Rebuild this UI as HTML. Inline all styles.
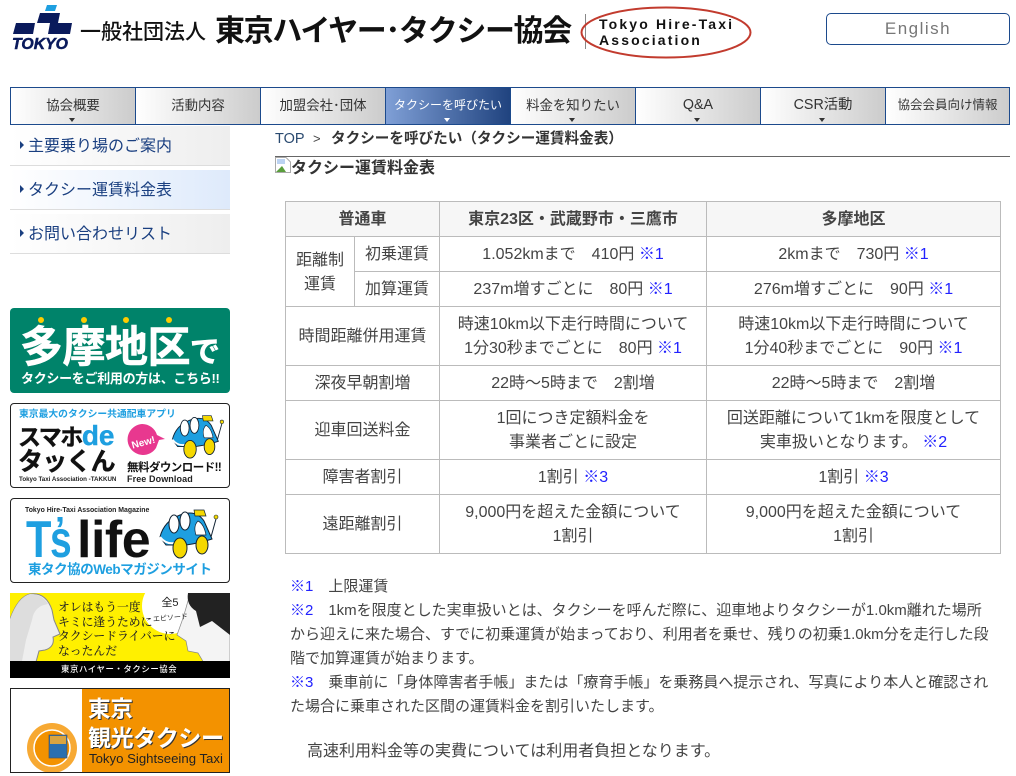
<!DOCTYPE html>
<html lang="ja"><head><meta charset="utf-8"><title>タクシー運賃料金表</title>
<style>
*{box-sizing:border-box}
html,body{margin:0;padding:0;background:#fff}
body{width:1016px;height:776px;position:relative;overflow:hidden;font-family:"Liberation Sans","Noto Sans CJK JP",sans-serif;color:#444;font-size:16px}
.a{position:absolute;white-space:nowrap}
#nav{position:absolute;left:10px;top:87px;width:1000px;height:38px;border:1px solid #1c4a8c;display:flex}
#nav div{width:125px;flex:none;border-right:1px solid #1c4a8c;background:linear-gradient(90deg,#fff,#ccc);text-align:center;font-size:13.400px;line-height:35px;color:#333;position:relative;white-space:nowrap}
#nav div:last-child{border-right:0;flex:1;font-size:12.500px}
#nav div.on{background:linear-gradient(90deg,#7f9fd6,#20437f);color:#fff;font-size:12px}
#nav div.w{font-size:14.300px}
#nav i{position:absolute;left:58px;bottom:2px;width:0;height:0;border:3px solid transparent;border-top:4px solid #333;border-bottom:0}
#nav .on i{border-top-color:#fff}
.side{position:absolute;left:10px;width:220px;height:40px;background:linear-gradient(90deg,#fff,#eee);border-bottom:1px solid #ddd;font-size:16px;line-height:41px;color:#1a3f80;padding-left:18px;white-space:nowrap}
.side:before{content:"";position:absolute;left:10px;top:15px;border:4px solid transparent;border-left:4px solid #1a3f80;border-right:0}
.side.on{background:linear-gradient(90deg,#fff,#deeafb)}
table{position:absolute;left:285px;top:201px;width:715px;border-collapse:collapse;table-layout:fixed;font-size:16px;line-height:24px;color:#444}
td,th{border:1px solid #bbb;text-align:center;padding:2px 0 0;white-space:nowrap}
th{background:#f6f6f6;font-size:16px;font-weight:bold}
.n{color:#22f;font-weight:normal}
.note{position:absolute;left:290px;top:575px;width:712px;font-size:15px;line-height:24px;color:#444;white-space:nowrap}
.ban{position:absolute;left:10px;width:220px;overflow:hidden}
</style></head><body>

<svg class="a" style="left:12px;top:4px" width="62" height="48" viewBox="0 0 62 48">
<path d="M35 1 H45 L43 7 H33Z" fill="#1e9fe0"/>
<path d="M28 9 H48 L46 19 H60 L58 30 H36 L38 19 H25Z" fill="#0a1a5c"/>
<path d="M4 19 H23 L21 30 H1Z" fill="#0a1a5c"/>
<text x="0" y="45" font-family="Liberation Sans" font-weight="bold" font-style="italic" font-size="16" fill="#0a1a5c" stroke="#0a1a5c" stroke-width=".5" textLength="56" lengthAdjust="spacingAndGlyphs">TOKYO</text>
</svg>
<div class="a" style="left:80px;top:20px;font-size:21px;line-height:26px;color:#111;font-weight:500">一般社団法人</div>
<div class="a" style="left:215px;top:14px;font-size:30px;line-height:36px;color:#111;font-weight:bold;letter-spacing:-1.350px">東京ハイヤー･タクシー協会</div>
<div class="a" style="left:585px;top:14px;width:1px;height:35px;background:#888"></div>
<svg class="a" style="left:578px;top:3px" width="176" height="56" viewBox="0 0 176 56"><ellipse cx="88" cy="29.500" rx="84.500" ry="25" fill="none" stroke="#c23b2e" stroke-width="2"/></svg>
<div class="a" style="left:599px;top:16px;font-size:14px;line-height:16px;font-weight:bold;color:#111;letter-spacing:2.150px">Tokyo Hire-Taxi<br>Association</div>
<div class="a" style="left:826px;top:13px;width:184px;height:32px;border:1px solid #1c4a8c;border-radius:5px;text-align:center;font-size:17px;line-height:30px;color:#777;letter-spacing:1.500px">English</div>

<div id="nav">
<div>協会概要<i></i></div><div>活動内容</div><div>加盟会社･団体</div><div class="on">タクシーを呼びたい<i></i></div><div>料金を知りたい<i></i></div><div class="w">Q&amp;A<i></i></div><div class="w">CSR活動<i></i></div><div>協会会員向け情報</div>
</div>

<div class="side" style="top:126px">主要乗り場のご案内</div>
<div class="side on" style="top:170px">タクシー運賃料金表</div>
<div class="side" style="top:214px">お問い合わせリスト</div>

<!-- 多摩地区 -->
<div class="ban" style="top:308px;height:85px;background:#00836a;border-radius:4px;color:#fff">
<svg class="a" style="left:0;top:0" width="220" height="30"><g fill="#fc0"><circle cx="31" cy="12" r="3"/><circle cx="74" cy="12" r="3"/><circle cx="116" cy="12" r="3"/><circle cx="159" cy="12" r="3"/></g></svg>
<div class="a" style="left:10px;top:16px;font-size:43px;line-height:48px;font-weight:bold;letter-spacing:-.5px;-webkit-text-stroke:.6px #fff">多摩地区<span style="font-size:30px">で</span></div>
<div class="a" style="left:11px;top:62px;font-size:13px;line-height:17px;font-weight:bold;letter-spacing:-.3px">タクシーをご利用の方は、こちら!!</div>
</div>

<!-- スマホde -->
<div class="ban" style="top:403px;height:85px;background:#fff;border:1px solid #222;border-radius:4px">
<div class="a" style="left:8px;top:5px;font-size:9.800px;line-height:12px;font-weight:bold;color:#1e9fe0">東京最大のタクシー共通配車アプリ</div>
<div class="a" style="left:7px;top:17px;font-size:23px;line-height:29px;font-weight:bold;color:#111;letter-spacing:-1.500px;-webkit-text-stroke:.4px #111">スマホ<span style="color:#1e9fe0;font-size:28px;letter-spacing:0;-webkit-text-stroke:.4px #1e9fe0">de</span></div>
<div class="a" style="left:7px;top:44px;font-size:25px;line-height:28px;font-weight:bold;color:#111;letter-spacing:-.8px;-webkit-text-stroke:.4px #111">タッくん</div>
<div class="a" style="left:8px;top:71px;font-size:6.200px;line-height:9px;font-weight:bold;color:#222">Tokyo Taxi Association -TAKKUN</div>
<svg class="a" style="left:115px;top:19px" width="50" height="36"><path d="M16 1a15.500 15.500 0 1 0 14 24l3-8 6-1-8-4A15.500 15.500 0 0 0 16 1Z" fill="#e8388f"/><text x="5" y="23" font-size="10" font-weight="bold" font-family="Liberation Sans" fill="#fff" transform="rotate(-15 16 18)">New!</text></svg>
<svg class="a" style="left:156px;top:9px" width="62" height="46" viewBox="0 0 62 52"><path d="M2 30 Q6 14 22 8 Q38 2 46 14 L54 32 Q42 36 28 38 L8 38Z" fill="#1e9fe0" stroke="#123" stroke-width="1"/><path d="M36 3h10l2 6h-11Z" fill="#f5d800" stroke="#123" stroke-width=".7"/><ellipse cx="16" cy="17" rx="5" ry="9" fill="#fff" stroke="#123"/><ellipse cx="27" cy="14" rx="5" ry="9" fill="#fff" stroke="#123"/><path d="M40 14q6 3 8 14h-10q-3-9 2-14Z" fill="#fff" stroke="#123" stroke-width=".7"/><path d="M2 30q8 10 20 4" fill="none" stroke="#fff" stroke-width="2"/><ellipse cx="22" cy="41" rx="7" ry="10" fill="#f5d800" stroke="#123"/><ellipse cx="44" cy="38" rx="6" ry="9" fill="#f5d800" stroke="#123"/><circle cx="58" cy="10" r="2" fill="#f5d800" stroke="#123" stroke-width=".6"/><path d="M58 12 53 30" stroke="#123"/></svg>
<div class="a" style="left:116px;top:58px;font-size:11.500px;line-height:13px;font-weight:bold;color:#111;letter-spacing:-.55px">無料ダウンロード!!</div>
<div class="a" style="left:116px;top:70px;font-size:9px;line-height:11px;font-weight:bold;color:#222;letter-spacing:.1px">Free Download</div>
</div>

<!-- T's life -->
<div class="ban" style="top:498px;height:85px;background:#fff;border:1px solid #222;border-radius:4px">
<div class="a" style="left:14px;top:6px;font-size:6.900px;line-height:11px;font-weight:bold;color:#222">Tokyo Hire-Taxi Association Magazine</div>
<div class="a" style="left:15px;top:16px;font-size:52px;line-height:50px;font-weight:bold;color:#1e9fe0;transform:scaleX(.8);transform-origin:0 0">T</div>
<div class="a" style="left:39px;top:16px;font-size:52px;line-height:50px;font-weight:bold;color:#1e9fe0;transform:scaleX(.75);transform-origin:0 0">s</div>
<div class="a" style="left:44px;top:6px;font-size:36px;line-height:50px;font-weight:bold;color:#1e9fe0">’</div>
<div class="a" style="left:66px;top:16px;font-size:52px;line-height:50px;font-weight:bold;color:#111;letter-spacing:-.5px">life</div>
<svg class="a" style="left:147px;top:8px" width="62" height="52" viewBox="0 0 62 52"><path d="M2 30 Q6 14 22 8 Q38 2 46 14 L54 32 Q42 36 28 38 L8 38Z" fill="#1e9fe0" stroke="#123" stroke-width="1"/><path d="M36 3h10l2 6h-11Z" fill="#f5d800" stroke="#123" stroke-width=".7"/><ellipse cx="16" cy="17" rx="5" ry="9" fill="#fff" stroke="#123"/><ellipse cx="27" cy="14" rx="5" ry="9" fill="#fff" stroke="#123"/><path d="M40 14q6 3 8 14h-10q-3-9 2-14Z" fill="#fff" stroke="#123" stroke-width=".7"/><path d="M2 30q8 10 20 4" fill="none" stroke="#fff" stroke-width="2"/><ellipse cx="22" cy="41" rx="7" ry="10" fill="#f5d800" stroke="#123"/><ellipse cx="44" cy="38" rx="6" ry="9" fill="#f5d800" stroke="#123"/><circle cx="58" cy="10" r="2" fill="#f5d800" stroke="#123" stroke-width=".6"/><path d="M58 12 53 30" stroke="#123"/></svg>
<div class="a" style="left:17px;top:63px;font-size:13.500px;line-height:16px;font-weight:bold;color:#1e9fe0;letter-spacing:-.45px">東タク協のWebマガジンサイト</div>
</div>

<!-- manga -->
<div class="ban" style="top:593px;height:85px;background:#fff000">
<svg class="a" style="left:0;top:0" width="220" height="85"><path d="M0 26Q8 4 20 1q16-2 22 16l2 10 6 14-7 3q2 10-8 13l-6 1-3 11H0Z" fill="#eee" stroke="#888"/><path d="M0 26Q8 4 20 1q12 0 18 10-14 2-16 16l-6 20-4 21H0Z" fill="#ddd"/><circle cx="160" cy="13" r="28" fill="#fff"/><path d="M220 0H180q-4 16-8 28l-5 14 9 6 2 10 10 2 6 10h26Z" fill="#f4f4f4" stroke="#888" stroke-width=".7"/><path d="M220 0H178q-2 12 8 18l4 16 12-6 18 14Z" fill="#222"/><rect y="68" width="220" height="17" fill="#000"/></svg>
<div class="a" style="left:48px;top:7px;font-size:11.800px;line-height:14.500px;color:#222;font-weight:500;font-family:'Liberation Serif','Noto Serif CJK SC',serif">オレはもう一度<br>キミに逢うために<br>タクシードライバーに<br>なったんだ</div>
<div class="a" style="left:138px;top:3px;font-size:11px;line-height:14px;color:#222;text-align:center;width:44px">全5<br><span style="display:inline-block;font-size:7px;transform:rotate(-5deg)">エピソード</span></div>
<div class="a" style="left:51px;top:69px;font-size:8.400px;line-height:15px;color:#fff;letter-spacing:.6px;font-weight:500">東京ハイヤー・タクシー協会</div>
</div>

<!-- sightseeing -->
<div class="ban" style="top:688px;height:85px;background:#f39200;border:1px solid #222">
<div class="a" style="left:0;top:0;width:71px;height:85px;background:#fff"></div>
<svg class="a" style="left:15px;top:33px" width="54" height="52"><circle cx="26" cy="26" r="25" fill="#f7a933"/><circle cx="26" cy="26" r="18" fill="#f39200" stroke="#fff" stroke-width="1.500"/><rect x="23" y="13" width="18" height="23" fill="#2a6fb0" stroke="#555" stroke-width=".7"/><rect x="24" y="14" width="16" height="8" fill="#d9a441"/></svg>
<div class="a" style="left:77px;top:8px;font-size:22.500px;line-height:26px;font-weight:bold;color:#fff;text-shadow:1px 1px 0 #333">東京</div>
<div class="a" style="left:77px;top:36px;font-size:23px;line-height:27px;font-weight:bold;color:#fff;text-shadow:1px 1px 0 #333;letter-spacing:-.4px">観光タクシー</div>
<div class="a" style="left:78px;top:62px;font-size:13.200px;line-height:16px;color:#222">Tokyo Sightseeing Taxi</div>
</div>

<!-- main -->
<div class="a" style="left:275px;top:129px;font-size:14.500px;line-height:20px;color:#2a4a70">TOP</div>
<div class="a" style="left:313px;top:129px;font-size:13px;line-height:20px;color:#444">&gt;</div>
<div class="a" style="left:331px;top:129px;font-size:14.600px;line-height:20px;font-weight:bold;color:#333">タクシーを呼びたい（タクシー運賃料金表）</div>
<div class="a" style="left:275px;top:156px;width:735px;height:1px;background:#666"></div>
<svg class="a" style="left:275px;top:157px" width="16" height="16" viewBox="0 0 16 16"><path d="M.5.5H11L15.500 5V15.500H.5Z" fill="#fff" stroke="#aaa"/><path d="M1 15 7 9 11 15Z" fill="#5a9e3c"/><path d="M2 2h8v5H2Z" fill="#bcd3f2"/></svg>
<div class="a" style="left:291px;top:159px;font-size:16px;line-height:20px;font-weight:bold;color:#333">タクシー運賃料金表</div>

<table>
<colgroup><col style="width:69px"><col style="width:85px"><col style="width:267px"><col style="width:294px"></colgroup>
<tr style="height:35px"><th colspan="2">普通車</th><th>東京23区・武蔵野市・三鷹市</th><th>多摩地区</th></tr>
<tr style="height:35px"><td rowspan="2">距離制<br>運賃</td><td>初乗運賃</td><td>1.052kmまで　410円 <span class="n">※1</span></td><td>2kmまで　730円 <span class="n">※1</span></td></tr>
<tr style="height:35px"><td>加算運賃</td><td>237m増すごとに　80円 <span class="n">※1</span></td><td>276m増すごとに　90円 <span class="n">※1</span></td></tr>
<tr style="height:59px"><td colspan="2">時間距離併用運賃</td><td>時速10km以下走行時間について<br>1分30秒までごとに　80円 <span class="n">※1</span></td><td>時速10km以下走行時間について<br>1分40秒までごとに　90円 <span class="n">※1</span></td></tr>
<tr style="height:35px"><td colspan="2">深夜早朝割増</td><td>22時～5時まで　2割増</td><td>22時～5時まで　2割増</td></tr>
<tr style="height:59px"><td colspan="2">迎車回送料金</td><td>1回につき定額料金を<br>事業者ごとに設定</td><td>回送距離について1kmを限度として<br>実車扱いとなります。 <span class="n">※2</span></td></tr>
<tr style="height:35px"><td colspan="2">障害者割引</td><td>1割引 <span class="n">※3</span></td><td>1割引 <span class="n">※3</span></td></tr>
<tr style="height:59px"><td colspan="2">遠距離割引</td><td>9,000円を超えた金額について<br>1割引</td><td>9,000円を超えた金額について<br>1割引</td></tr>
</table>

<div class="note"><span class="n">※1</span>　上限運賃<br>
<span class="n">※2</span>　1kmを限度とした実車扱いとは、タクシーを呼んだ際に、迎車地よりタクシーが1.0km離れた場所<br>
から迎えに来た場合、すでに初乗運賃が始まっており、利用者を乗せ、残りの初乗1.0km分を走行した段<br>
階で加算運賃が始まります。<br>
<span class="n">※3</span>　乗車前に「身体障害者手帳」または「療育手帳」を乗務員へ提示され、写真により本人と確認され<br>
た場合に乗車された区間の運賃料金を割引いたします。</div>
<div class="a" style="left:307px;top:740px;font-size:16px;line-height:24px;color:#444">高速利用料金等の実費については利用者負担となります。</div>
</body></html>
